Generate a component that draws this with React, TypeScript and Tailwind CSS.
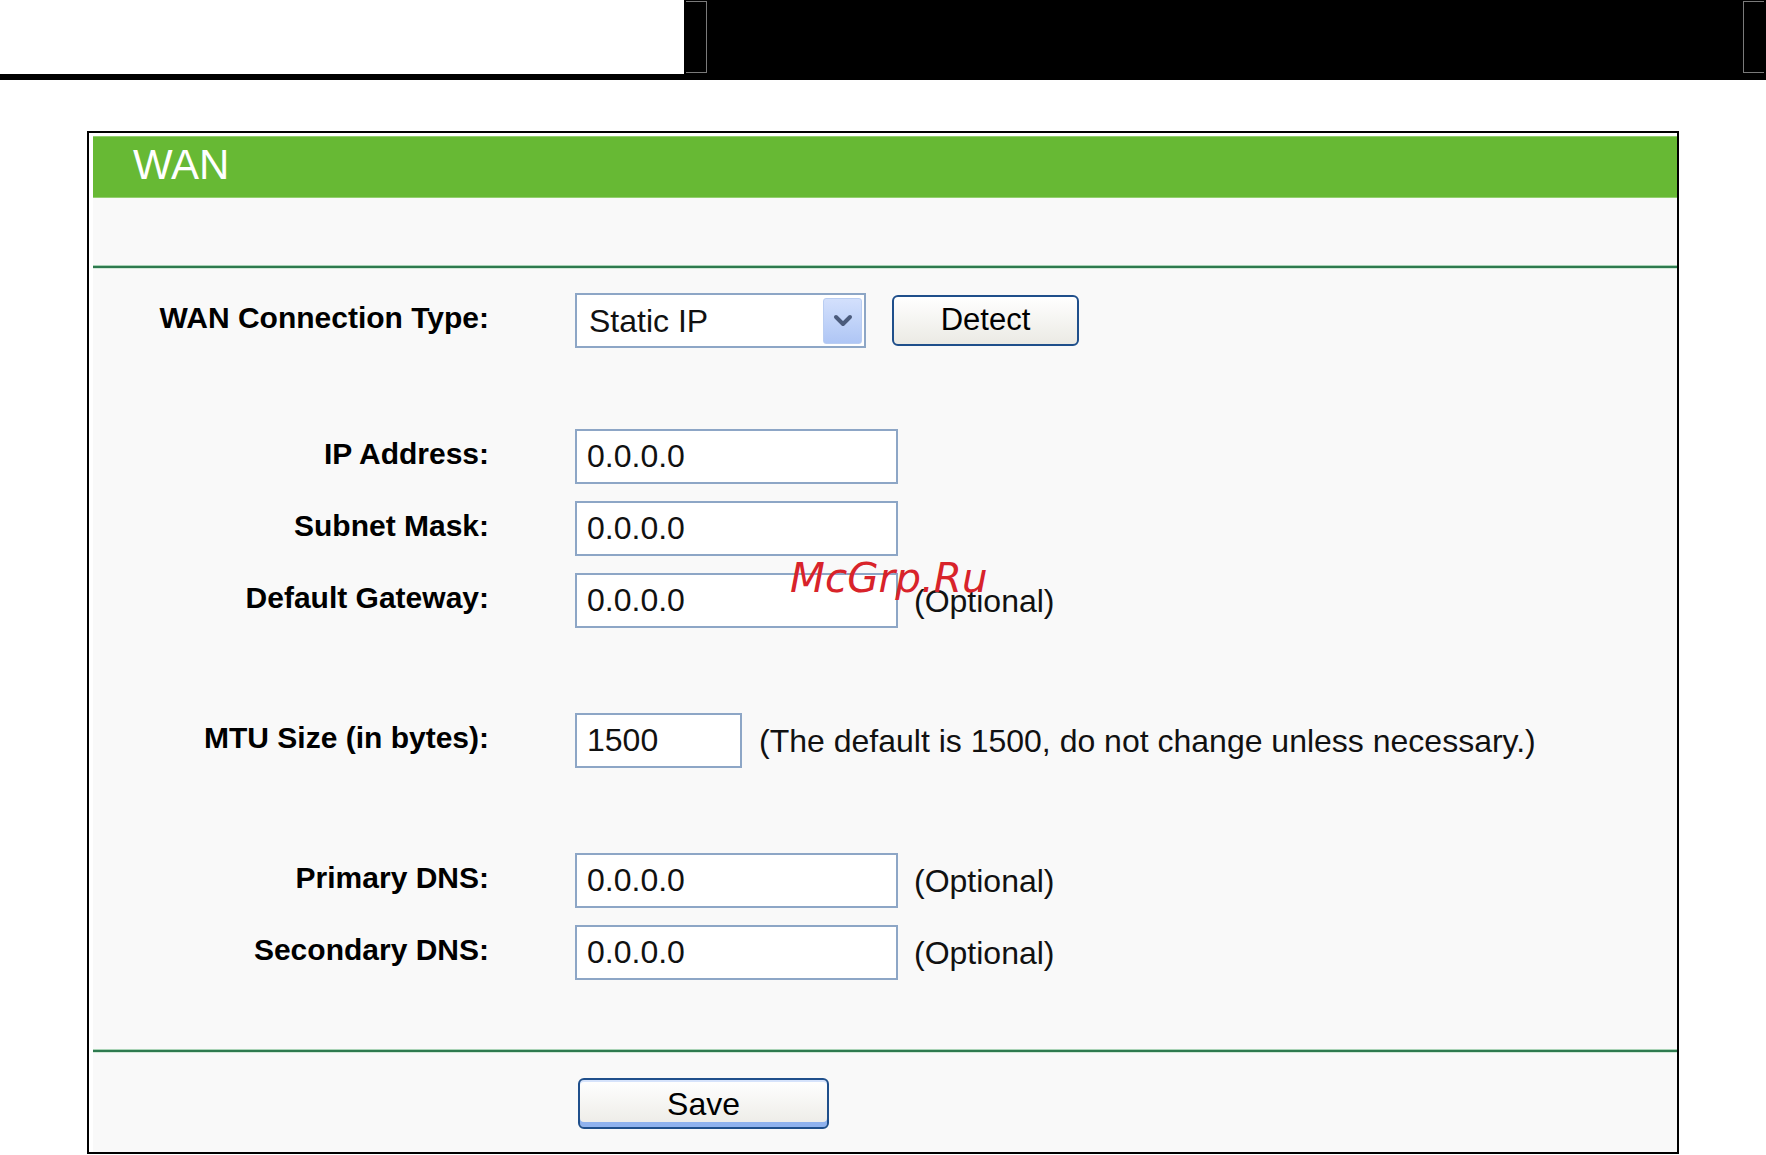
import React from 'react';

function Separator() {
  return (
    <div className="flex flex-col">
      <div className="h-[1px] bg-[#a9d3b6]" />
      <div className="h-[2px] bg-[#2e7a4f]" />
      <div className="h-[1px] bg-[#d3e8d8]" />
    </div>
  );
}

function Field({ value, width = 'w-[323px]' }: { value: string; width?: string }) {
  return (
    <input
      readOnly
      value={value}
      className={`${width} h-[55px] border-2 border-[#8da6c6] bg-white pl-[10px] text-[32px] text-[#111] outline-none`}
    />
  );
}

function Row({ label, children, className = '' }: { label: string; children: React.ReactNode; className?: string }) {
  return (
    <div className={`flex h-[55px] items-center ${className}`}>
      <div className="w-[396px] pb-[6px] text-right text-[30px] font-bold text-black">{label}</div>
      <div className="ml-[86px] flex items-center">{children}</div>
    </div>
  );
}

function Optional() {
  return <span className="ml-[16px] text-[32px] text-[#111]">(Optional)</span>;
}

export default function App() {
  return (
    <div className="relative min-h-[1155px] w-[1766px] bg-white font-['Liberation_Sans',Arial,sans-serif]">
      {/* top strip */}
      <div className="relative h-[80px] bg-black">
        <div className="h-[74px] w-[684px] bg-white" />
        <div className="absolute left-[686px] top-[1px] h-[72px] w-[21px] border-y border-r border-[#7a7a7a]" />
        <div className="absolute left-[1743px] top-[1px] h-[72px] w-[21px] border-y border-l border-[#7a7a7a]" />
      </div>

      <div className="ml-[87px] mt-[51px] w-[1592px] border-2 border-black bg-white">
        <div className="ml-[4px] mt-[3px] bg-[#f9f9f9]">
          <div className="h-[62px] border-y border-[#93cf6e] bg-[#67b934] pl-[40px] pt-[7px]">
            <div className="text-[42px] leading-[42px] text-white">WAN</div>
          </div>

          <div className="h-[67px]" />
          <Separator />

          <Row label="WAN Connection Type:" className="mt-[24px]">
            <div className="flex h-[55px] w-[291px] items-center justify-between border-2 border-[#8da6c6] bg-white pl-[12px] pr-[2px]">
              <span className="text-[32px] text-[#111]">Static IP</span>
              <div className="flex h-[46px] w-[39px] items-center justify-center rounded-[3px] border border-[#b9cdf2] bg-gradient-to-b from-[#d3e0fc] to-[#afc6f5]">
                <svg width="20" height="13" viewBox="0 0 20 13">
                  <path d="M3 3 L10 10 L17 3" fill="none" stroke="#4b5b7c" strokeWidth="4" strokeLinecap="round" strokeLinejoin="round" />
                </svg>
              </div>
            </div>
            <button className="ml-[26px] h-[51px] w-[187px] rounded-[6px] border-2 border-[#1f4f8b] bg-gradient-to-b from-white to-[#ebeae4] text-[31px] text-black">
              Detect
            </button>
          </Row>

          <Row label="IP Address:" className="mt-[81px]">
            <Field value="0.0.0.0" />
          </Row>
          <Row label="Subnet Mask:" className="mt-[17px]">
            <Field value="0.0.0.0" />
          </Row>
          <Row label="Default Gateway:" className="mt-[17px]">
            <Field value="0.0.0.0" />
            <Optional />
          </Row>

          <Row label="MTU Size (in bytes):" className="mt-[85px]">
            <Field value="1500" width="w-[167px]" />
            <span className="ml-[17px] text-[32px] text-[#111]">(The default is 1500, do not change unless necessary.)</span>
          </Row>

          <Row label="Primary DNS:" className="mt-[85px]">
            <Field value="0.0.0.0" />
            <Optional />
          </Row>
          <Row label="Secondary DNS:" className="mt-[17px]">
            <Field value="0.0.0.0" />
            <Optional />
          </Row>

          <div className="h-[69px]" />
          <Separator />

          <div className="pb-[23px] pl-[485px] pt-[25px]">
            <button className="h-[51px] w-[251px] rounded-[6px] border-2 border-[#1f4f8b] bg-gradient-to-b from-white to-[#ecebe6] text-[32px] text-black shadow-[inset_0_-5px_0_#8fb2ee,inset_0_2px_0_#d6e3fb]">
              Save
            </button>
          </div>
        </div>
      </div>

      <div className="absolute left-[790px] top-[558px] font-['DejaVu_Sans',sans-serif] text-[40.5px] italic leading-[40px] text-[#d8232a]">
        McGrp.Ru
      </div>
    </div>
  );
}
